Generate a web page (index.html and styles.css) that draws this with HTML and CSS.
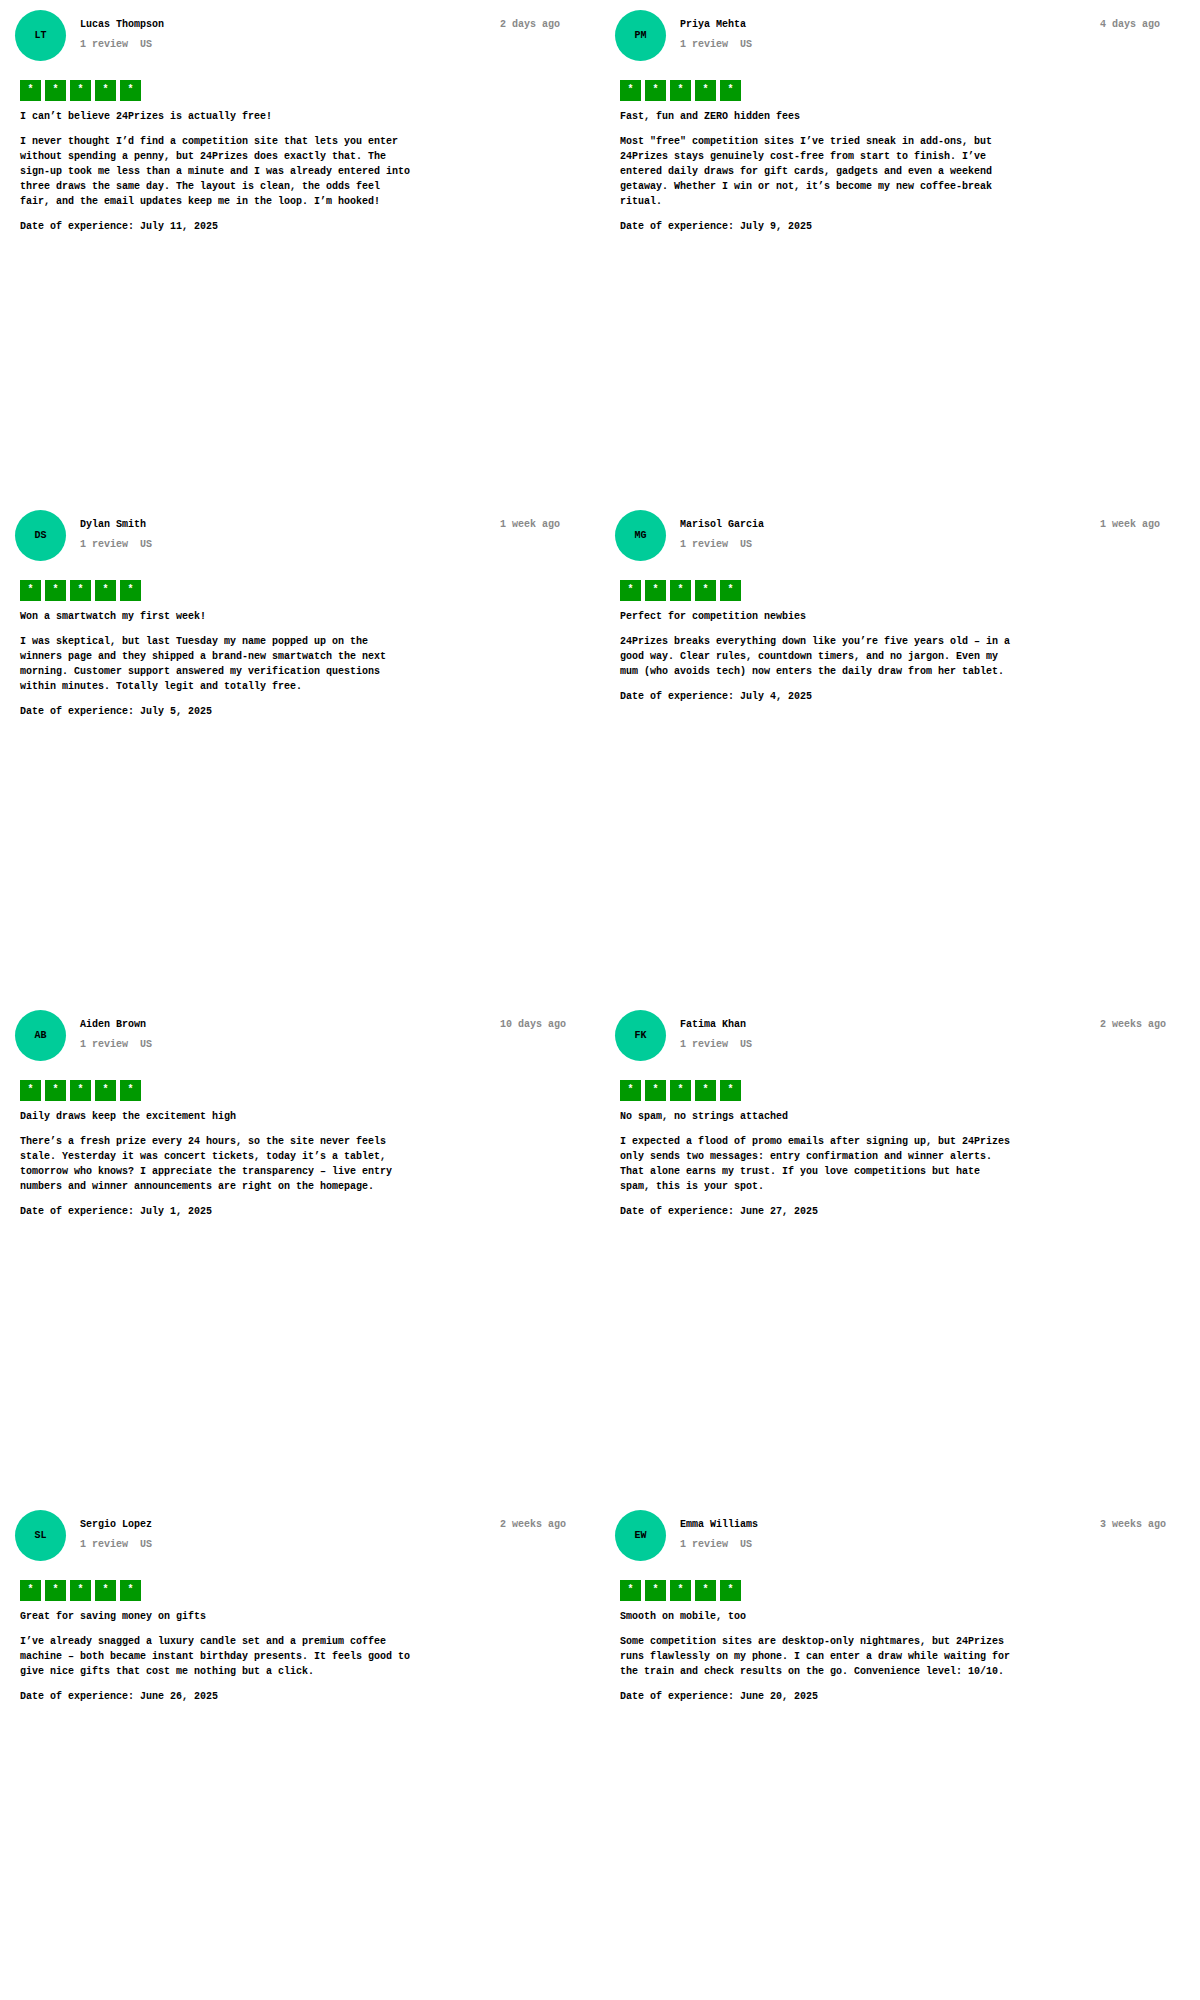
FILE: index.html
```html
<!DOCTYPE html>
<html lang="en">
<head>
<meta charset="utf-8">
<title>Reviews</title>
<link rel="stylesheet" href="styles.css">
</head>
<body>
<div class="grid">
  <article class="card">
    <header class="head">
      <div class="avatar">LT</div>
      <div class="who"><div class="name">Lucas Thompson</div><div class="meta">1 review&nbsp;&nbsp;US</div></div>
      <div class="time">2 days ago</div>
    </header>
    <div class="stars"><span>*</span><span>*</span><span>*</span><span>*</span><span>*</span></div>
    <h3 class="title">I can’t believe 24Prizes is actually free!</h3>
    <p class="body">I never thought I’d find a competition site that lets you enter without spending a penny, but 24Prizes does exactly that. The sign-up took me less than a minute and I was already entered into three draws the same day. The layout is clean, the odds feel fair, and the email updates keep me in the loop. I’m hooked!</p>
    <p class="date">Date of experience: July 11, 2025</p>
  </article>
  <article class="card">
    <header class="head">
      <div class="avatar">PM</div>
      <div class="who"><div class="name">Priya Mehta</div><div class="meta">1 review&nbsp;&nbsp;US</div></div>
      <div class="time">4 days ago</div>
    </header>
    <div class="stars"><span>*</span><span>*</span><span>*</span><span>*</span><span>*</span></div>
    <h3 class="title">Fast, fun and ZERO hidden fees</h3>
    <p class="body">Most "free" competition sites I’ve tried sneak in add-ons, but 24Prizes stays genuinely cost-free from start to finish. I’ve entered daily draws for gift cards, gadgets and even a weekend getaway. Whether I win or not, it’s become my new coffee-break ritual.</p>
    <p class="date">Date of experience: July 9, 2025</p>
  </article>
  <article class="card">
    <header class="head">
      <div class="avatar">DS</div>
      <div class="who"><div class="name">Dylan Smith</div><div class="meta">1 review&nbsp;&nbsp;US</div></div>
      <div class="time">1 week ago</div>
    </header>
    <div class="stars"><span>*</span><span>*</span><span>*</span><span>*</span><span>*</span></div>
    <h3 class="title">Won a smartwatch my first week!</h3>
    <p class="body">I was skeptical, but last Tuesday my name popped up on the winners page and they shipped a brand-new smartwatch the next morning. Customer support answered my verification questions within minutes. Totally legit and totally free.</p>
    <p class="date">Date of experience: July 5, 2025</p>
  </article>
  <article class="card">
    <header class="head">
      <div class="avatar">MG</div>
      <div class="who"><div class="name">Marisol Garcia</div><div class="meta">1 review&nbsp;&nbsp;US</div></div>
      <div class="time">1 week ago</div>
    </header>
    <div class="stars"><span>*</span><span>*</span><span>*</span><span>*</span><span>*</span></div>
    <h3 class="title">Perfect for competition newbies</h3>
    <p class="body">24Prizes breaks everything down like you’re five years old – in a good way. Clear rules, countdown timers, and no jargon. Even my mum (who avoids tech) now enters the daily draw from her tablet.</p>
    <p class="date">Date of experience: July 4, 2025</p>
  </article>
  <article class="card">
    <header class="head">
      <div class="avatar">AB</div>
      <div class="who"><div class="name">Aiden Brown</div><div class="meta">1 review&nbsp;&nbsp;US</div></div>
      <div class="time">10 days ago</div>
    </header>
    <div class="stars"><span>*</span><span>*</span><span>*</span><span>*</span><span>*</span></div>
    <h3 class="title">Daily draws keep the excitement high</h3>
    <p class="body">There’s a fresh prize every 24 hours, so the site never feels stale. Yesterday it was concert tickets, today it’s a tablet, tomorrow who knows? I appreciate the transparency – live entry numbers and winner announcements are right on the homepage.</p>
    <p class="date">Date of experience: July 1, 2025</p>
  </article>
  <article class="card">
    <header class="head">
      <div class="avatar">FK</div>
      <div class="who"><div class="name">Fatima Khan</div><div class="meta">1 review&nbsp;&nbsp;US</div></div>
      <div class="time">2 weeks ago</div>
    </header>
    <div class="stars"><span>*</span><span>*</span><span>*</span><span>*</span><span>*</span></div>
    <h3 class="title">No spam, no strings attached</h3>
    <p class="body">I expected a flood of promo emails after signing up, but 24Prizes only sends two messages: entry confirmation and winner alerts. That alone earns my trust. If you love competitions but hate spam, this is your spot.</p>
    <p class="date">Date of experience: June 27, 2025</p>
  </article>
  <article class="card">
    <header class="head">
      <div class="avatar">SL</div>
      <div class="who"><div class="name">Sergio Lopez</div><div class="meta">1 review&nbsp;&nbsp;US</div></div>
      <div class="time">2 weeks ago</div>
    </header>
    <div class="stars"><span>*</span><span>*</span><span>*</span><span>*</span><span>*</span></div>
    <h3 class="title">Great for saving money on gifts</h3>
    <p class="body">I’ve already snagged a luxury candle set and a premium coffee machine – both became instant birthday presents. It feels good to give nice gifts that cost me nothing but a click.</p>
    <p class="date">Date of experience: June 26, 2025</p>
  </article>
  <article class="card">
    <header class="head">
      <div class="avatar">EW</div>
      <div class="who"><div class="name">Emma Williams</div><div class="meta">1 review&nbsp;&nbsp;US</div></div>
      <div class="time">3 weeks ago</div>
    </header>
    <div class="stars"><span>*</span><span>*</span><span>*</span><span>*</span><span>*</span></div>
    <h3 class="title">Smooth on mobile, too</h3>
    <p class="body">Some competition sites are desktop-only nightmares, but 24Prizes runs flawlessly on my phone. I can enter a draw while waiting for the train and check results on the go. Convenience level: 10/10.</p>
    <p class="date">Date of experience: June 20, 2025</p>
  </article>
</div>
</body>
</html>
```

FILE: styles.css
```css
html, body {
  margin: 0;
  padding: 0;
  background: #ffffff;
}
body {
  font-family: "Liberation Mono", "DejaVu Sans Mono", monospace;
  font-size: 10px;
  font-weight: bold;
  color: #000000;
  line-height: 15px;
}
.grid {
  display: grid;
  grid-template-columns: 600px 600px;
  grid-auto-rows: 500px;
}
.card {
  padding: 10px 15px 0 20px;
  box-sizing: border-box;
}
.head {
  display: grid;
  grid-template-columns: 51px 1fr 85px;
  column-gap: 14px;
  align-items: start;
  margin-left: -5px;
}
.avatar {
  width: 51px;
  height: 51px;
  border-radius: 50%;
  background: #00cc99;
  display: flex;
  align-items: center;
  justify-content: center;
  font-size: 10px;
}
.who {
  padding-top: 7px;
}
.meta {
  margin-top: 5px;
  color: #888888;
}
.time {
  padding-top: 7px;
  color: #888888;
}
.stars {
  display: flex;
  gap: 4px;
  margin-top: 19px;
}
.stars span {
  width: 21px;
  height: 21px;
  background: #009900;
  color: #ffffff;
  display: flex;
  justify-content: center;
  align-items: flex-start;
  padding-top: 2px;
  box-sizing: border-box;
}
.title {
  margin: 8px 0 0;
  font-size: 10px;
  line-height: 15px;
}
.body {
  margin: 10px 0 0;
  max-width: 393px;
}
.date {
  margin: 10px 0 0;
}
```
